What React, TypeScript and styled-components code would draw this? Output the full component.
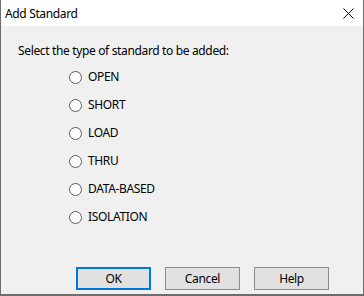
import styled, { createGlobalStyle } from "styled-components";

const GlobalStyle = createGlobalStyle`
  html, body {
    margin: 0;
    padding: 0;
    background: #f0f0f0;
  }
  body {
    font-family: "Noto Sans", "Open Sans", sans-serif;
    font-size: 12px;
    letter-spacing: -0.35px;
    color: #000;
  }
`;

const standards = ["OPEN", "SHORT", "LOAD", "THRU", "DATA-BASED", "ISOLATION"];

const App = () => {
  return (
    <>
      <GlobalStyle />
      <Dialog>
        <TitleBar>
          <Title>Add Standard</Title>
          <CloseButton aria-label="Close">
            <svg width="11" height="11" viewBox="0 0 11 11">
              <path d="M0.5 0.5 L10.5 10.5 M10.5 0.5 L0.5 10.5" stroke="#000" strokeWidth="1" />
            </svg>
          </CloseButton>
        </TitleBar>
        <Body>
          <Prompt>Select the type of standard to be added:</Prompt>
          <RadioList>
            {standards.map((s) => (
              <RadioRow key={s}>
                <RadioCircle />
                <RadioLabel>{s}</RadioLabel>
              </RadioRow>
            ))}
          </RadioList>
        </Body>
        <ButtonRow>
          <DialogButton $focused>OK</DialogButton>
          <DialogButton>Cancel</DialogButton>
          <DialogButton>Help</DialogButton>
        </ButtonRow>
      </Dialog>
    </>
  );
};

export default App;

const Dialog = styled.div`
  width: 364px;
  height: 296px;
  box-sizing: border-box;
  display: flex;
  flex-direction: column;
  background: #f0f0f0;
  border-left: 1px solid #6d6d6d;
  border-right: 1px solid #6d6d6d;
  border-bottom: 2px solid #6d6d6d;
`;

const TitleBar = styled.div`
  height: 26px;
  background: #fff;
  display: flex;
  align-items: center;
  justify-content: space-between;
  padding-left: 4px;
`;

const Title = styled.div`
  font-size: 12px;
  padding-top: 1px;
`;

const CloseButton = styled.div`
  width: 46px;
  height: 26px;
  display: flex;
  align-items: center;
  justify-content: center;
  margin-right: -8px;
`;

const Body = styled.div`
  flex: 1;
  padding: 17px 0 0 17px;
`;

const Prompt = styled.div`
  height: 16px;
  line-height: 16px;
`;

const RadioList = styled.div`
  display: flex;
  flex-direction: column;
  gap: 12px;
  padding: 10px 0 0 51px;
`;

const RadioRow = styled.div`
  display: flex;
  align-items: center;
  height: 16px;
  gap: 6px;
`;

const RadioCircle = styled.span`
  width: 13px;
  height: 13px;
  box-sizing: border-box;
  border: 1px solid #5a5a5a;
  border-radius: 50%;
  background: #fff;
`;

const RadioLabel = styled.span`
  line-height: 16px;
`;

const ButtonRow = styled.div`
  display: flex;
  gap: 14px;
  padding: 0 0 4px 75px;
`;

const DialogButton = styled.button<{ $focused?: boolean }>`
  width: 75px;
  height: 23px;
  box-sizing: border-box;
  background: #e1e1e1;
  border: ${(p) => (p.$focused ? "2px solid #0078d7" : "1px solid #8c8c8c")};
  font-family: inherit;
  font-size: 12px;
  letter-spacing: -0.35px;
  color: #000;
  padding: 0;
`;
